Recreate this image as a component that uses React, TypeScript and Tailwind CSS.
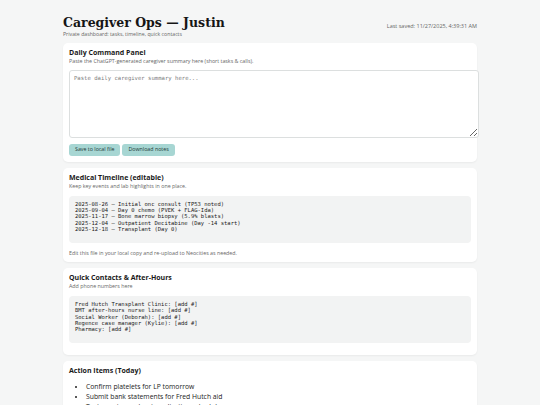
import { useState } from "react";

const timeline = `2025-08-26 — Initial onc consult (TP53 noted)
2025-09-04 — Day 0 chemo (PVEK + FLAG-Ida)
2025-11-17 — Bone marrow biopsy (5.9% blasts)
2025-12-04 — Outpatient Decitabine (Day -14 start)
2025-12-18 — Transplant (Day 0)
`;

const contacts = `Fred Hutch Transplant Clinic: [add #]
BMT after-hours nurse line: [add #]
Social Worker (Deborah): [add #]
Regence case manager (Kylie): [add #]
Pharmacy: [add #]
`;

const actionItems = [
  "Confirm platelets for LP tomorrow",
  "Submit bank statements for Fred Hutch aid",
  "Text care team about medication schedule",
];

const App = () => {
  const [summary, setSummary] = useState("");

  return (
    <div className="min-h-screen bg-[#f5f6f6] font-['Open_Sans',sans-serif] text-[#1a1a1a]">
      <div className="max-w-[414px] mx-auto pt-[15px]">
        {/* Header */}
        <div className="flex justify-between items-center">
          <div>
            <h1 className="font-['DejaVu_Serif',serif] font-bold text-[12.5px] leading-[16px] text-[#151515]">
              Caregiver Ops — Justin
            </h1>
            <p className="text-[5.2px] leading-[7px] text-[#666]">
              Private dashboard: tasks, timeline, quick contacts
            </p>
          </div>
          <div className="text-[5.5px] leading-[7px] text-[#666]">
            Last saved: 11/27/2025, 4:39:31 AM
          </div>
        </div>

        <div className="flex flex-col gap-[6px] mt-[5px]">
          {/* Daily Command Panel */}
          <section className="bg-white rounded-[5px] shadow-[0_1px_2px_rgba(0,0,0,0.05)] pt-[5px] px-[6px] pb-[6px]">
            <h2 className="text-[7px] leading-[9px] font-bold">Daily Command Panel</h2>
            <p className="text-[5.3px] leading-[8px] text-[#666]">
              Paste the ChatGPT-generated caregiver summary here (short tasks &amp; calls).
            </p>
            <textarea
              value={summary}
              onChange={(e) => setSummary(e.target.value)}
              placeholder="Paste daily caregiver summary here..."
              className="mt-[5px] w-[410px] h-[68px] block border border-[#dcdfdf] rounded-[3px] bg-white px-[4px] py-[4px] font-['DejaVu_Sans_Mono',monospace] text-[5.6px] leading-[7px] placeholder:text-[#7c7c7c] focus:outline-none"
            />
            <div className="flex gap-[2px] mt-[6px]">
              <button className="h-[12px] px-[6px] rounded-[3px] bg-[#a7d6d3] text-[5.3px] text-[#1f3a38]">
                Save to local file
              </button>
              <button className="h-[12px] px-[6px] rounded-[3px] bg-[#a7d6d3] text-[5.3px] text-[#1f3a38]">
                Download notes
              </button>
            </div>
          </section>

          {/* Medical Timeline */}
          <section className="bg-white rounded-[5px] shadow-[0_1px_2px_rgba(0,0,0,0.05)] pt-[5px] px-[6px] pb-[5px]">
            <h2 className="text-[7px] leading-[9px] font-bold">Medical Timeline (editable)</h2>
            <p className="text-[5.3px] leading-[8px] text-[#666]">
              Keep key events and lab highlights in one place.
            </p>
            <pre className="mt-[6px] bg-[#f2f3f3] rounded-[4px] px-[6px] pt-[5px] pb-[5px] font-['DejaVu_Sans_Mono',monospace] text-[5.5px] leading-[6.2px] text-[#222] whitespace-pre">
              {timeline}
              {"\n"}
            </pre>
            <p className="mt-[6px] text-[5.3px] leading-[8px] text-[#666]">
              Edit this file in your local copy and re-upload to Neocities as needed.
            </p>
          </section>

          {/* Quick Contacts */}
          <section className="bg-white rounded-[5px] shadow-[0_1px_2px_rgba(0,0,0,0.05)] pt-[5px] px-[6px] pb-[12px]">
            <h2 className="text-[7px] leading-[9px] font-bold">Quick Contacts &amp; After-Hours</h2>
            <p className="text-[5.3px] leading-[8px] text-[#666]">Add phone numbers here</p>
            <pre className="mt-[6px] bg-[#f2f3f3] rounded-[4px] px-[6px] pt-[5px] pb-[5px] font-['DejaVu_Sans_Mono',monospace] text-[5.5px] leading-[6.2px] text-[#222] whitespace-pre">
              {contacts}
              {"\n"}
            </pre>
          </section>

          {/* Action Items */}
          <section className="bg-white rounded-[5px] shadow-[0_1px_2px_rgba(0,0,0,0.05)] pt-[5px] px-[6px] pb-[8px]">
            <h2 className="text-[7px] leading-[9px] font-bold">Action Items (Today)</h2>
            <ul className="mt-[7px] list-disc pl-[17px] text-[6.8px] leading-[10px] text-[#222]">
              {actionItems.map((item, idx) => (
                <li key={idx}>{item}</li>
              ))}
            </ul>
          </section>
        </div>
      </div>
    </div>
  );
};

export default App;
